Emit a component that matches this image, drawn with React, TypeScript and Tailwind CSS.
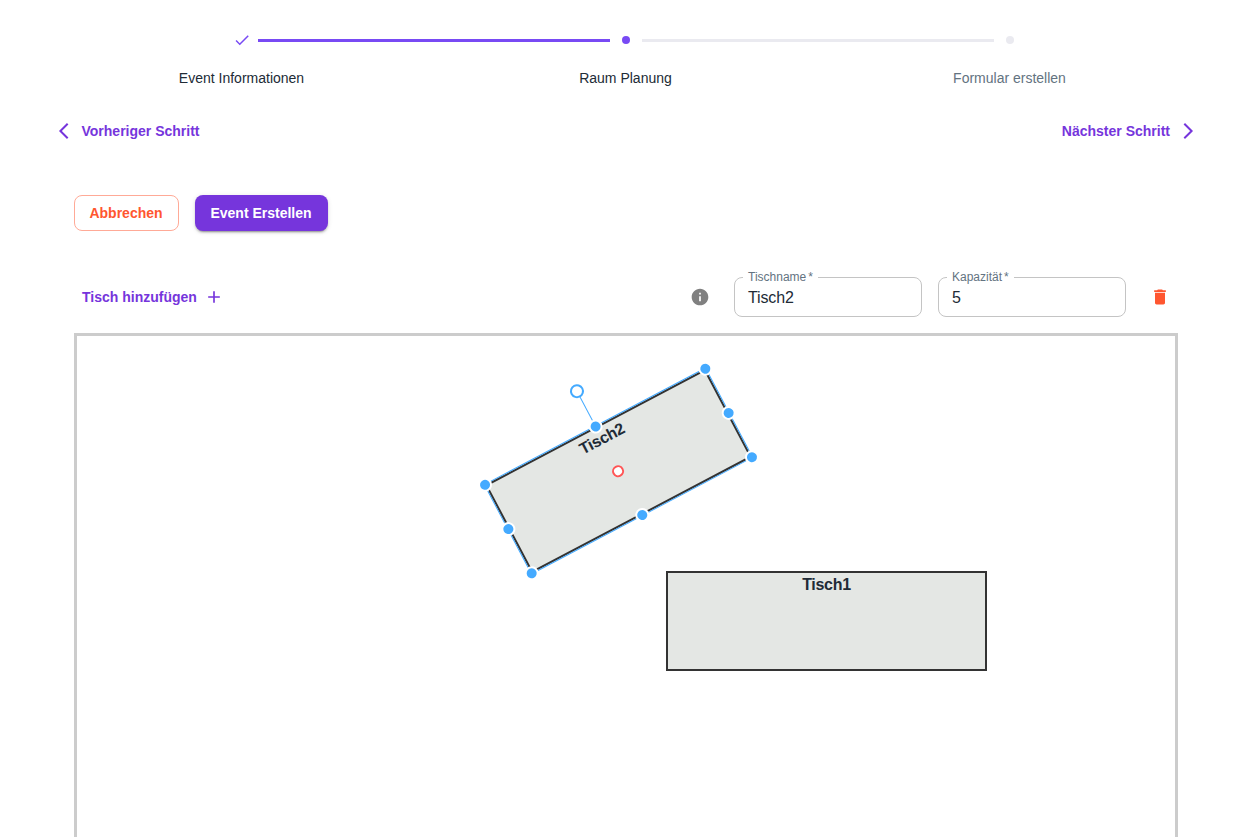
import React from "react";

type StepState = "done" | "active" | "pending";

const steps: { label: string; state: StepState }[] = [
  { label: "Event Informationen", state: "done" },
  { label: "Raum Planung", state: "active" },
  { label: "Formular erstellen", state: "pending" },
];

function StepIcon({ state }: { state: StepState }) {
  if (state === "done") {
    return (
      <svg viewBox="0 0 24 24" className="size-[18px] fill-[#784af4]">
        <path d="M9 16.2 4.8 12l-1.4 1.4L9 19 21 7l-1.4-1.4z" />
      </svg>
    );
  }
  return (
    <span
      className={
        state === "active"
          ? "size-2 rounded-full bg-[#784af4]"
          : "size-2 rounded-full bg-[#eaeaf0]"
      }
    />
  );
}

function Connector({ on, hidden }: { on: boolean; hidden: boolean }) {
  if (hidden) return <span className="flex-1" />;
  return <span className={on ? "h-[3px] flex-1 bg-[#784af4]" : "h-[3px] flex-1 bg-[#eaeaf0]"} />;
}

function Stepper() {
  return (
    <ol className="mx-[50px] grid w-[1152px] grid-cols-3 pt-[29px]">
      {steps.map((s, i) => (
        <li key={s.label} className="flex flex-col items-center">
          {/* each connector spans two columns: the second half of one and the first half of the next */}
          <div className="flex h-[23px] w-full items-center">
            <Connector hidden={i === 0} on={s.state !== "pending"} />
            <span className="mb-px flex w-8 justify-center">
              <StepIcon state={s.state} />
            </span>
            <Connector hidden={i === steps.length - 1} on={s.state === "done"} />
          </div>
          <span
            className={
              s.state === "pending"
                ? "mt-[15px] mr-px text-sm leading-[22px] text-[#637381]"
                : "mt-[15px] mr-px text-sm leading-[22px] text-[#212b36]"
            }
          >
            {s.label}
          </span>
        </li>
      ))}
    </ol>
  );
}

function Field({ label, value }: { label: string; value: string }) {
  return (
    <fieldset className="-mt-[9px] h-[49px] w-[188px] rounded-lg border border-[#c4c4c4] pl-[8px]">
      <legend className="h-[18px] px-[5px] text-xs leading-[18px] whitespace-nowrap text-[#637381]">
        {label}
        <span className="ml-[2px]">*</span>
      </legend>
      <div className="pl-[5px] text-base leading-[23px] tracking-[-0.15px] text-[#212b36]">{value}</div>
    </fieldset>
  );
}

const handles = [
  "left-0 top-0",
  "left-1/2 top-0",
  "left-full top-0",
  "left-0 top-1/2",
  "left-full top-1/2",
  "left-0 top-full",
  "left-1/2 top-full",
  "left-full top-full",
];

function SelectedTable() {
  return (
    <div className="absolute left-[417px] top-[85px] h-[100px] w-[249px] rotate-[-27.8deg]">
      <div className="h-full w-full border-2 border-[#333] bg-[#e4e7e4] pl-px text-center text-base leading-[24px] font-bold tracking-[-0.3px] text-[#212b36]">
        Tisch2
      </div>
      <div className="absolute -inset-px border border-[#4af]" />
      <div className="absolute -top-10 left-1/2 h-10 w-px -translate-x-1/2 bg-[#4af]" />
      <div className="absolute -top-10 left-1/2 size-[14px] -translate-1/2 rounded-full border-2 border-[#4af] bg-white" />
      {handles.map((pos) => (
        <div
          key={pos}
          className={`absolute size-[14px] -translate-1/2 rounded-full border-2 border-white bg-[#4af] ${pos}`}
        />
      ))}
      <div className="absolute left-1/2 top-1/2 -ml-[0.5px] size-3 -translate-1/2 rounded-full border-2 border-[#f55] bg-white" />
    </div>
  );
}

export default function App() {
  return (
    <main className="h-[837px] w-[1238px] overflow-hidden bg-white font-['Liberation_Sans',Arial,sans-serif]">
      <Stepper />

      <nav className="mt-[24px] flex h-[36px] items-center justify-between pr-[38px] pl-[52px] text-sm font-bold text-[#7635dc]">
        <button className="flex items-center gap-[5.5px]">
          <svg viewBox="0 0 24 24" className="size-6 fill-none stroke-current stroke-2">
            <path d="M15.7 4.7 8.4 12l7.3 7.3" />
          </svg>
          Vorheriger Schritt
        </button>
        <button className="flex items-center gap-[6px]">
          Nächster Schritt
          <svg viewBox="0 0 24 24" className="size-6 fill-none stroke-current stroke-2">
            <path d="m8.3 4.7 7.3 7.3-7.3 7.3" />
          </svg>
        </button>
      </nav>

      <div className="mt-[46px] ml-[74px] flex gap-4 text-sm font-bold">
        <button className="h-9 w-[105px] rounded-lg border border-[#ffaa97] pr-px text-[#ff5630]">
          Abbrechen
        </button>
        <button className="h-9 w-[133px] rounded-lg bg-[#7635dc] pr-px text-white shadow-[0_3px_1px_-2px_rgba(0,0,0,0.2),0_2px_2px_0_rgba(0,0,0,0.14),0_1px_5px_0_rgba(0,0,0,0.12)]">
          Event Erstellen
        </button>
      </div>

      <div className="mt-[46px] flex h-10 items-center pr-[68px] pl-[82px]">
        <button className="mr-auto flex items-center gap-[7px] text-sm font-bold text-[#7635dc]">
          Tisch hinzufügen
          <svg viewBox="0 0 24 24" className="size-5 fill-current">
            <path d="M19 13h-6v6h-2v-6H5v-2h6V5h2v6h6z" />
          </svg>
        </button>
        <svg viewBox="0 0 24 24" className="mr-[24px] size-5 fill-[#808080]">
          <path d="M12 2C6.48 2 2 6.48 2 12s4.48 10 10 10 10-4.48 10-10S17.52 2 12 2m1 15h-2v-6h2zm0-8h-2V7h2z" />
        </svg>
        <div className="flex gap-4">
          <Field label="Tischname" value="Tisch2" />
          <Field label="Kapazität" value="5" />
        </div>
        <svg viewBox="0 0 24 24" className="ml-[24px] size-5 fill-[#ff5630]">
          <path d="M6 19c0 1.1.9 2 2 2h8c1.1 0 2-.9 2-2V7H6zM19 4h-3.5l-1-1h-5l-1 1H5v2h14z" />
        </svg>
      </div>

      <section className="relative mt-4 ml-[74px] h-[600px] w-[1104px] border-[3px] border-[#ccc]">
        <div className="absolute top-[235px] left-[589px] h-[100px] w-[321px] border-2 border-[#333] bg-[#e4e7e4] text-center text-base leading-[24px] font-bold tracking-[-0.3px] text-[#212b36]">
          Tisch1
        </div>
        <SelectedTable />
      </section>
    </main>
  );
}
